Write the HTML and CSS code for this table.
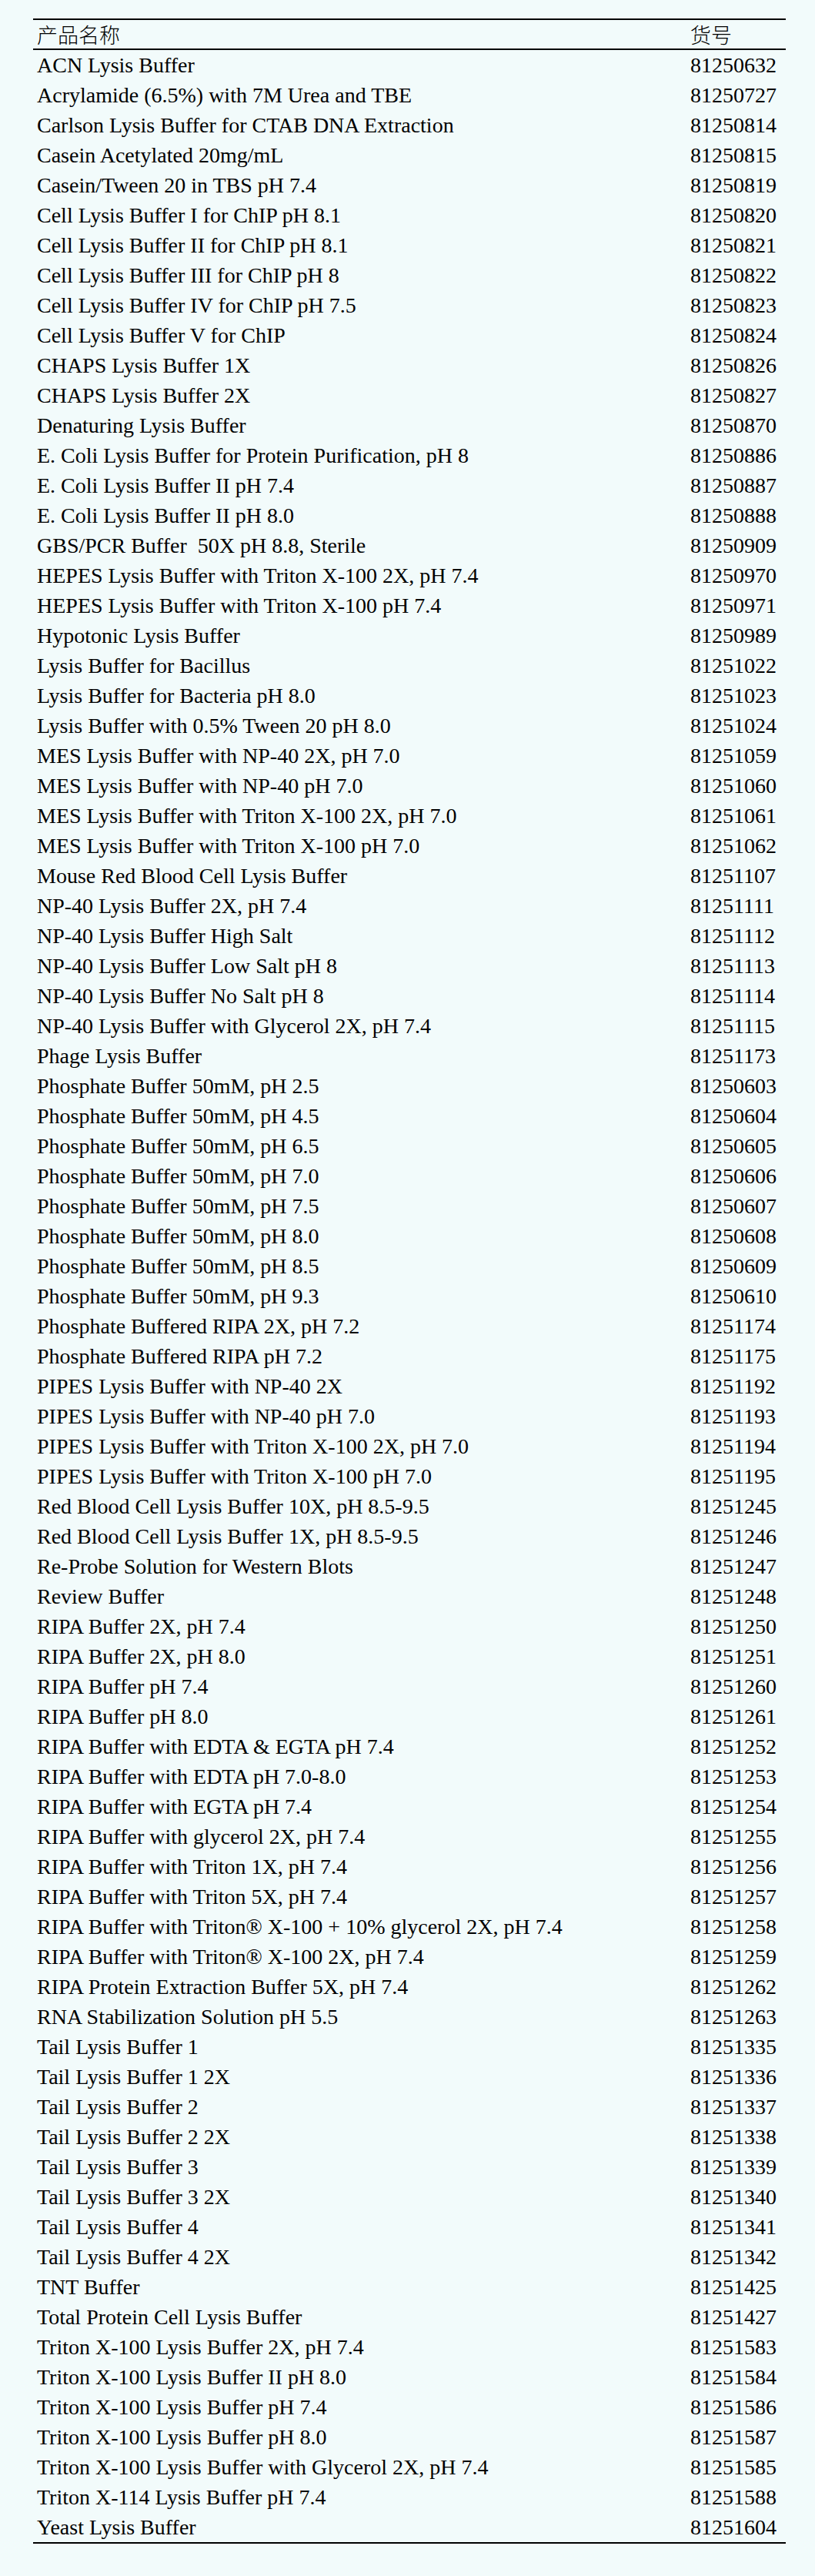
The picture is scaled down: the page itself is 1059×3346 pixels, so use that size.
FILE: index.html
```html
<!DOCTYPE html>
<html lang="zh-CN">
<head>
  <meta charset="UTF-8">
  <title>产品列表</title>
  <meta name="viewport" content="width=device-width, initial-scale=1.0">
  <link rel="stylesheet" href="styles.css">
</head>
<body>

  <div class="page">
    <table class="products">
      <thead>
        <tr>
          <th class="name">产品名称</th>
          <th class="code">货号</th>
        </tr>
      </thead>
      <tbody>
        <tr><td>ACN Lysis Buffer</td><td>81250632</td></tr>
        <tr><td>Acrylamide (6.5%) with 7M Urea and TBE</td><td>81250727</td></tr>
        <tr><td>Carlson Lysis Buffer for CTAB DNA Extraction</td><td>81250814</td></tr>
        <tr><td>Casein Acetylated 20mg/mL</td><td>81250815</td></tr>
        <tr><td>Casein/Tween 20 in TBS pH 7.4</td><td>81250819</td></tr>
        <tr><td>Cell Lysis Buffer I for ChIP pH 8.1</td><td>81250820</td></tr>
        <tr><td>Cell Lysis Buffer II for ChIP pH 8.1</td><td>81250821</td></tr>
        <tr><td>Cell Lysis Buffer III for ChIP pH 8</td><td>81250822</td></tr>
        <tr><td>Cell Lysis Buffer IV for ChIP pH 7.5</td><td>81250823</td></tr>
        <tr><td>Cell Lysis Buffer V for ChIP</td><td>81250824</td></tr>
        <tr><td>CHAPS Lysis Buffer 1X</td><td>81250826</td></tr>
        <tr><td>CHAPS Lysis Buffer 2X</td><td>81250827</td></tr>
        <tr><td>Denaturing Lysis Buffer</td><td>81250870</td></tr>
        <tr><td>E. Coli Lysis Buffer for Protein Purification, pH 8</td><td>81250886</td></tr>
        <tr><td>E. Coli Lysis Buffer II pH 7.4</td><td>81250887</td></tr>
        <tr><td>E. Coli Lysis Buffer II pH 8.0</td><td>81250888</td></tr>
        <tr><td>GBS/PCR Buffer &nbsp;50X pH 8.8, Sterile</td><td>81250909</td></tr>
        <tr><td>HEPES Lysis Buffer with Triton X-100 2X, pH 7.4</td><td>81250970</td></tr>
        <tr><td>HEPES Lysis Buffer with Triton X-100 pH 7.4</td><td>81250971</td></tr>
        <tr><td>Hypotonic Lysis Buffer</td><td>81250989</td></tr>
        <tr><td>Lysis Buffer for Bacillus</td><td>81251022</td></tr>
        <tr><td>Lysis Buffer for Bacteria pH 8.0</td><td>81251023</td></tr>
        <tr><td>Lysis Buffer with 0.5% Tween 20 pH 8.0</td><td>81251024</td></tr>
        <tr><td>MES Lysis Buffer with NP-40 2X, pH 7.0</td><td>81251059</td></tr>
        <tr><td>MES Lysis Buffer with NP-40 pH 7.0</td><td>81251060</td></tr>
        <tr><td>MES Lysis Buffer with Triton X-100 2X, pH 7.0</td><td>81251061</td></tr>
        <tr><td>MES Lysis Buffer with Triton X-100 pH 7.0</td><td>81251062</td></tr>
        <tr><td>Mouse Red Blood Cell Lysis Buffer</td><td>81251107</td></tr>
        <tr><td>NP-40 Lysis Buffer 2X, pH 7.4</td><td>81251111</td></tr>
        <tr><td>NP-40 Lysis Buffer High Salt</td><td>81251112</td></tr>
        <tr><td>NP-40 Lysis Buffer Low Salt pH 8</td><td>81251113</td></tr>
        <tr><td>NP-40 Lysis Buffer No Salt pH 8</td><td>81251114</td></tr>
        <tr><td>NP-40 Lysis Buffer with Glycerol 2X, pH 7.4</td><td>81251115</td></tr>
        <tr><td>Phage Lysis Buffer</td><td>81251173</td></tr>
        <tr><td>Phosphate Buffer 50mM, pH 2.5</td><td>81250603</td></tr>
        <tr><td>Phosphate Buffer 50mM, pH 4.5</td><td>81250604</td></tr>
        <tr><td>Phosphate Buffer 50mM, pH 6.5</td><td>81250605</td></tr>
        <tr><td>Phosphate Buffer 50mM, pH 7.0</td><td>81250606</td></tr>
        <tr><td>Phosphate Buffer 50mM, pH 7.5</td><td>81250607</td></tr>
        <tr><td>Phosphate Buffer 50mM, pH 8.0</td><td>81250608</td></tr>
        <tr><td>Phosphate Buffer 50mM, pH 8.5</td><td>81250609</td></tr>
        <tr><td>Phosphate Buffer 50mM, pH 9.3</td><td>81250610</td></tr>
        <tr><td>Phosphate Buffered RIPA 2X, pH 7.2</td><td>81251174</td></tr>
        <tr><td>Phosphate Buffered RIPA pH 7.2</td><td>81251175</td></tr>
        <tr><td>PIPES Lysis Buffer with NP-40 2X</td><td>81251192</td></tr>
        <tr><td>PIPES Lysis Buffer with NP-40 pH 7.0</td><td>81251193</td></tr>
        <tr><td>PIPES Lysis Buffer with Triton X-100 2X, pH 7.0</td><td>81251194</td></tr>
        <tr><td>PIPES Lysis Buffer with Triton X-100 pH 7.0</td><td>81251195</td></tr>
        <tr><td>Red Blood Cell Lysis Buffer 10X, pH 8.5-9.5</td><td>81251245</td></tr>
        <tr><td>Red Blood Cell Lysis Buffer 1X, pH 8.5-9.5</td><td>81251246</td></tr>
        <tr><td>Re-Probe Solution for Western Blots</td><td>81251247</td></tr>
        <tr><td>Review Buffer</td><td>81251248</td></tr>
        <tr><td>RIPA Buffer 2X, pH 7.4</td><td>81251250</td></tr>
        <tr><td>RIPA Buffer 2X, pH 8.0</td><td>81251251</td></tr>
        <tr><td>RIPA Buffer pH 7.4</td><td>81251260</td></tr>
        <tr><td>RIPA Buffer pH 8.0</td><td>81251261</td></tr>
        <tr><td>RIPA Buffer with EDTA &amp; EGTA pH 7.4</td><td>81251252</td></tr>
        <tr><td>RIPA Buffer with EDTA pH 7.0-8.0</td><td>81251253</td></tr>
        <tr><td>RIPA Buffer with EGTA pH 7.4</td><td>81251254</td></tr>
        <tr><td>RIPA Buffer with glycerol 2X, pH 7.4</td><td>81251255</td></tr>
        <tr><td>RIPA Buffer with Triton 1X, pH 7.4</td><td>81251256</td></tr>
        <tr><td>RIPA Buffer with Triton 5X, pH 7.4</td><td>81251257</td></tr>
        <tr><td>RIPA Buffer with Triton® X-100 + 10% glycerol 2X, pH 7.4</td><td>81251258</td></tr>
        <tr><td>RIPA Buffer with Triton® X-100 2X, pH 7.4</td><td>81251259</td></tr>
        <tr><td>RIPA Protein Extraction Buffer 5X, pH 7.4</td><td>81251262</td></tr>
        <tr><td>RNA Stabilization Solution pH 5.5</td><td>81251263</td></tr>
        <tr><td>Tail Lysis Buffer 1</td><td>81251335</td></tr>
        <tr><td>Tail Lysis Buffer 1 2X</td><td>81251336</td></tr>
        <tr><td>Tail Lysis Buffer 2</td><td>81251337</td></tr>
        <tr><td>Tail Lysis Buffer 2 2X</td><td>81251338</td></tr>
        <tr><td>Tail Lysis Buffer 3</td><td>81251339</td></tr>
        <tr><td>Tail Lysis Buffer 3 2X</td><td>81251340</td></tr>
        <tr><td>Tail Lysis Buffer 4</td><td>81251341</td></tr>
        <tr><td>Tail Lysis Buffer 4 2X</td><td>81251342</td></tr>
        <tr><td>TNT Buffer</td><td>81251425</td></tr>
        <tr><td>Total Protein Cell Lysis Buffer</td><td>81251427</td></tr>
        <tr><td>Triton X-100 Lysis Buffer 2X, pH 7.4</td><td>81251583</td></tr>
        <tr><td>Triton X-100 Lysis Buffer II pH 8.0</td><td>81251584</td></tr>
        <tr><td>Triton X-100 Lysis Buffer pH 7.4</td><td>81251586</td></tr>
        <tr><td>Triton X-100 Lysis Buffer pH 8.0</td><td>81251587</td></tr>
        <tr><td>Triton X-100 Lysis Buffer with Glycerol 2X, pH 7.4</td><td>81251585</td></tr>
        <tr><td>Triton X-114 Lysis Buffer pH 7.4</td><td>81251588</td></tr>
        <tr><td>Yeast Lysis Buffer</td><td>81251604</td></tr>
      </tbody>
    </table>
  </div>

</body>
</html>
```

FILE: styles.css
```css
* {
  box-sizing: border-box;
  margin: 0;
  padding: 0;
}

body {
  font-family: "Liberation Serif", "Times New Roman", "Noto Sans CJK SC", serif;
  background: #f2fbfb;
  color: #000;
}

.page {
  padding: 24px 38px 44px 43px;
}

.products {
  width: 978px;
  border-collapse: collapse;
  border-top: 2px solid #000;
  border-bottom: 2px solid #000;
}

.products th {
  font-family: "Noto Sans CJK SC", sans-serif;
  font-weight: 300;
  font-size: 27px;
  line-height: 37px;
  text-align: left;
  height: 39px;
  padding: 0 5px;
  border-bottom: 2px solid #000;
}

.products td {
  font-size: 28px;
  height: 39px;
  line-height: 39px;
  padding: 0 5px;
  white-space: nowrap;
}

.products th.name {
  width: 849px;
}
```
